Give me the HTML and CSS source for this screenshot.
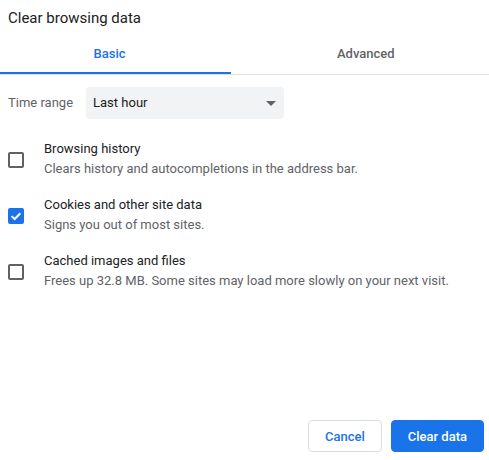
FILE: index.html
```html
<!DOCTYPE html>
<html lang="en">
<head>
<meta charset="utf-8">
<title>Clear browsing data</title>
<link rel="stylesheet" href="styles.css">
</head>
<body>
<div class="dialog">
  <div class="title">Clear browsing data</div>
  <div class="tabs">
    <div class="tab tab-active">Basic</div>
    <div class="tab tab-other">Advanced</div>
  </div>
  <div class="range-row">
    <span class="range-label">Time range</span>
    <div class="select">
      <span class="select-value">Last hour</span>
      <span class="select-arrow"></span>
    </div>
  </div>
  <div class="items">
    <div class="item">
      <span class="checkbox"></span>
      <div class="item-text">
        <div class="item-title">Browsing history</div>
        <div class="item-desc">Clears history and autocompletions in the address bar.</div>
      </div>
    </div>
    <div class="item">
      <span class="checkbox checked">
        <svg viewBox="0 0 16 16" width="16" height="16"><path d="M3.6 8.1 L6.6 11 L12.4 5.2" fill="none" stroke="#fff" stroke-width="2"/></svg>
      </span>
      <div class="item-text">
        <div class="item-title">Cookies and other site data</div>
        <div class="item-desc">Signs you out of most sites.</div>
      </div>
    </div>
    <div class="item">
      <span class="checkbox"></span>
      <div class="item-text">
        <div class="item-title">Cached images and files</div>
        <div class="item-desc">Frees up 32.8 MB. Some sites may load more slowly on your next visit.</div>
      </div>
    </div>
  </div>
  <div class="footer">
    <button class="btn btn-cancel">Cancel</button>
    <button class="btn btn-primary">Clear data</button>
  </div>
</div>
</body>
</html>
```
FILE: styles.css
```css
html, body {
  margin: 0;
  padding: 0;
  background: #ffffff;
}
body {
  font-family: Roboto, "Liberation Sans", sans-serif;
  color: #202124;
  font-size: 13px;
  line-height: 20px;
}
.dialog {
  height: 460px;
  display: flex;
  flex-direction: column;
  box-sizing: border-box;
}
.title {
  padding: 8px 8px 0 8px;
  font-size: 15px;
  line-height: 20px;
  color: #202124;
}
.tabs {
  display: flex;
  border-bottom: 1px solid #e0e0e0;
}
.tab {
  padding: 16px 0 8px 0;
  font-weight: 500;
  font-size: 13px;
  line-height: 20px;
}
.tab-active {
  width: 231px;
  box-sizing: border-box;
  text-align: center;
  padding-right: 12px;
  color: #1a73e8;
  border-bottom: 2px solid #1a73e8;
}
.tab-other {
  flex: 1;
  padding-left: 106px;
  padding-bottom: 10px;
  color: #5f6368;
}
.range-row {
  display: flex;
  align-items: center;
  gap: 13px;
  margin-top: 12px;
  padding-left: 8px;
}
.range-label {
  color: #5f6368;
}
.select {
  width: 198px;
  height: 32px;
  box-sizing: border-box;
  background: #f1f3f4;
  border-radius: 4px;
  display: flex;
  align-items: center;
  justify-content: space-between;
  padding: 0 8px 0 7px;
}
.select-value {
  color: #202124;
}
.select-arrow {
  width: 0;
  height: 0;
  border-left: 5px solid transparent;
  border-right: 5px solid transparent;
  border-top: 5px solid #5f6368;
}
.items {
  display: flex;
  flex-direction: column;
  gap: 16px;
  margin-top: 20px;
  padding-left: 8px;
}
.item {
  display: flex;
  align-items: flex-start;
  gap: 20px;
}
.checkbox {
  width: 16px;
  height: 16px;
  box-sizing: border-box;
  border: 2px solid #5f6368;
  border-radius: 2px;
  margin-top: 13px;
  flex: none;
  display: flex;
  align-items: center;
  justify-content: center;
}
.checkbox.checked {
  background: #1a73e8;
  border-color: #1a73e8;
}
.checkbox.checked svg {
  flex: none;
}
.item-title {
  color: #202124;
}
.item-desc {
  color: #5f6368;
}
.footer {
  margin-top: auto;
  display: flex;
  justify-content: flex-end;
  gap: 9px;
  padding: 0 5px 8px 0;
}
.btn {
  height: 32px;
  box-sizing: border-box;
  border-radius: 4px;
  font-family: Roboto, "Liberation Sans", sans-serif;
  font-size: 13px;
  font-weight: 500;
  padding: 0 16px;
  cursor: pointer;
}
.btn-cancel {
  background: #ffffff;
  color: #1a73e8;
  border: 1px solid #dadce0;
  min-width: 73px;
}
.btn-primary {
  background: #1a73e8;
  color: #ffffff;
  border: 1px solid #1a73e8;
  min-width: 91px;
}
```
